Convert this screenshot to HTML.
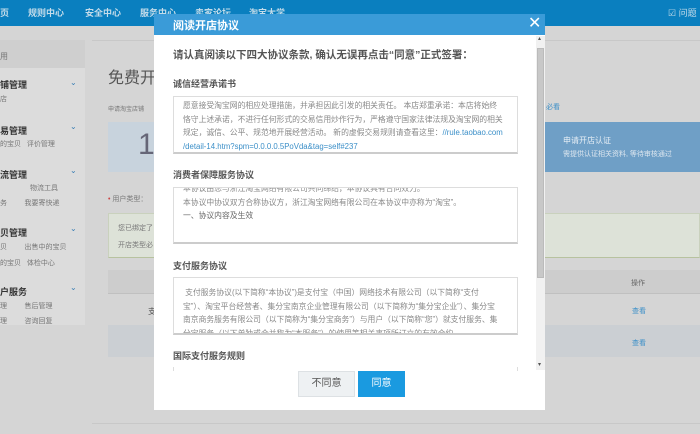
<!DOCTYPE html>
<html><head><meta charset="utf-8"><style>
*{margin:0;padding:0;box-sizing:border-box}
body{width:700px;height:434px;overflow:hidden;background:#d5d5d5;font-family:"Liberation Sans","Noto Sans CJK SC",sans-serif;position:relative;color:#555}
.a{position:absolute;white-space:nowrap}
.top{left:0;top:0;width:700px;height:26px;background:#0a7fbf}
.top span{position:absolute;top:6px;font-size:9px;color:#c4dcea;font-weight:bold}
.sb{left:0;top:40px;width:85px;height:285px;background:#dcdcdc}
.sbh{left:0;top:40px;width:85px;height:28px;background:#cfcfcf}
.sbt{font-size:9px;font-weight:bold;color:#333}
.sbs{font-size:7px;color:#777}
.chev{font-size:8px;color:#3b7fb5}
.modal{left:154px;top:14px;width:391px;height:396px;background:#fff}
.mh{left:154px;top:14px;width:391px;height:21px;background:#3a9bd8}
.box{background:#fff;border:1px solid #ddd;border-bottom:2px solid #ccc;overflow:hidden}
.box p{font-size:7.8px;color:#888;line-height:13.5px;white-space:nowrap;padding-left:9px}
.h2{font-size:9px;color:#555;font-weight:bold}
</style></head><body>
<div class="a top">
<span style="left:0">页</span><span style="left:28px">规则中心</span><span style="left:85px">安全中心</span><span style="left:140px">服务中心</span><span style="left:195px">卖家论坛</span><span style="left:249px">淘宝大学</span><span style="left:668px;font-weight:normal">☑ 问题</span>
</div>
<div class="a" style="left:92px;top:40px;width:608px;height:1px;background:#c8c8c8"></div>
<div class="a sb"></div><div class="a sbh"></div>
<div class="a sbs" style="left:0;top:51px;font-size:8px">用</div>
<div class="a sbt" style="left:0;top:78px">铺管理</div><div class="a chev" style="left:70px;top:78px">⌄</div>
<div class="a sbs" style="left:0;top:94px">店</div>
<div class="a sbt" style="left:0;top:124px">易管理</div><div class="a chev" style="left:70px;top:122px">⌄</div>
<div class="a sbs" style="left:0;top:139px">的宝贝 &nbsp; 评价管理</div>
<div class="a sbt" style="left:0;top:168px">流管理</div><div class="a chev" style="left:70px;top:166px">⌄</div>
<div class="a sbs" style="left:30px;top:183px">物流工具</div>
<div class="a sbs" style="left:0;top:198px">务 &nbsp; &nbsp; &nbsp; &nbsp; 我要寄快递</div>
<div class="a sbt" style="left:0;top:226px">贝管理</div><div class="a chev" style="left:70px;top:224px">⌄</div>
<div class="a sbs" style="left:0;top:242px">贝 &nbsp; &nbsp; &nbsp; &nbsp; 出售中的宝贝</div>
<div class="a sbs" style="left:0;top:258px">的宝贝 &nbsp; 体检中心</div>
<div class="a sbt" style="left:0;top:285px">户服务</div><div class="a chev" style="left:70px;top:283px">⌄</div>
<div class="a sbs" style="left:0;top:301px">理 &nbsp; &nbsp; &nbsp; &nbsp; 售后管理</div>
<div class="a sbs" style="left:0;top:316px">理 &nbsp; &nbsp; &nbsp; &nbsp; 咨询回复</div>

<div class="a" style="left:108px;top:64px;font-size:16px;color:#555">免费开</div>
<div class="a" style="left:108px;top:104px;font-size:6px;color:#777">申请淘宝店铺</div>
<div class="a" style="left:546px;top:102px;font-size:7px;color:#3b8fc8">必看</div>
<div class="a" style="left:108px;top:122px;width:50px;height:50px;background:#c8d3dd"></div>
<div class="a" style="left:138px;top:128px;font-size:30px;color:#667">1</div>
<div class="a" style="left:545px;top:122px;width:155px;height:50px;background:#6f9fc6"></div>
<div class="a" style="left:563px;top:135px;font-size:8px;color:#e6eef5">申请开店认证</div>
<div class="a" style="left:563px;top:149px;font-size:7px;color:#dce6ef">需提供认证相关资料, 等待审核通过</div>
<div class="a" style="left:108px;top:194px;font-size:7px;color:#777"><span style="color:#c44">•</span> 用户类型：</div>
<div class="a" style="left:108px;top:213px;width:592px;height:45px;background:#dde2d8;border:1px solid #c9d1bd;border-bottom:1px solid #b7c29f"></div>
<div class="a" style="left:118px;top:223px;font-size:7px;color:#777">您已绑定了</div>
<div class="a" style="left:118px;top:240px;font-size:7px;color:#777">开店类型必</div>
<div class="a" style="left:108px;top:270px;width:592px;height:24px;background:#cdcdcd;border-bottom:1px solid #c0c0c0"></div>
<div class="a" style="left:631px;top:278px;font-size:7px;color:#666">操作</div>
<div class="a" style="left:148px;top:306px;font-size:8px;color:#555">支</div>
<div class="a" style="left:632px;top:306px;font-size:7px;color:#3b8fc8">查看</div>
<div class="a" style="left:108px;top:325px;width:592px;height:32px;background:#cbcfd3"></div>
<div class="a" style="left:632px;top:338px;font-size:7px;color:#3b8fc8">查看</div>
<div class="a" style="left:92px;top:423px;width:608px;height:1px;background:#c8c8c8"></div>

<div class="a modal"></div>
<div class="a mh"></div>
<div class="a" style="left:173px;top:17px;font-size:11px;color:#fff;font-weight:bold">阅读开店协议</div>
<div class="a" style="left:528px;top:13px;font-size:16px;color:#fff">✕</div>
<div class="a" style="left:536px;top:36px;width:9px;height:334px;background:#f1f1f1"></div>
<div class="a" style="left:537px;top:48px;width:7px;height:230px;background:#c8c8c8;border:1px solid #bbb"></div>
<div class="a" style="left:538px;top:35px;font-size:6px;color:#555">▴</div>
<div class="a" style="left:538px;top:361px;font-size:6px;color:#555">▾</div>

<div class="a" style="left:173px;top:47px;font-size:10.5px;color:#555;font-weight:bold">请认真阅读以下四大协议条款, 确认无误再点击“同意”正式签署：</div>
<div class="a h2" style="left:173px;top:77px">诚信经营承诺书</div>
<div class="a box" style="left:173px;top:96px;width:345px;height:58px;padding-top:2px">
<p>愿意接受淘宝网的相应处理措施，并承担因此引发的相关责任。 本店郑重承诺：本店将始终</p>
<p>恪守上述承诺，不进行任何形式的交易信用炒作行为，严格遵守国家法律法规及淘宝网的相关</p>
<p>规定，诚信、公平、规范地开展经营活动。 新的虚假交易规则请查看这里：<span style="color:#3b8fc8">//rule.taobao.com</span></p>
<p style="color:#3b8fc8">/detail-14.htm?spm=0.0.0.0.5PoVda&amp;tag=self#237</p>
</div>
<div class="a h2" style="left:173px;top:168px">消费者保障服务协议</div>
<div class="a box" style="left:173px;top:187px;width:345px;height:57px;padding-top:0">
<p style="margin-top:-6px">本协议由您与浙江淘宝网络有限公司共同缔结，本协议具有合同效力。</p>
<p>本协议中协议双方合称协议方，浙江淘宝网络有限公司在本协议中亦称为“淘宝”。</p>
<p style="color:#666">一、协议内容及生效</p>
</div>
<div class="a h2" style="left:173px;top:259px">支付服务协议</div>
<div class="a box" style="left:173px;top:277px;width:345px;height:58px;padding-top:8px">
<p>&nbsp;支付服务协议(以下简称“本协议”)是支付宝（中国）网络技术有限公司（以下简称“支付</p>
<p>宝”）、淘宝平台经营者、集分宝南京企业管理有限公司（以下简称为“集分宝企业”）、集分宝</p>
<p>南京商务服务有限公司（以下简称为“集分宝商务”）与用户（以下简称“您”）就支付服务、集</p>
<p>分宝服务（以下单独或合并称为“本服务”）的使用等相关事项所订立的有效合约。</p>
</div>
<div class="a h2" style="left:173px;top:349px">国际支付服务规则</div>
<div class="a" style="left:173px;top:367px;width:345px;height:4px;border-left:1px solid #ddd;border-right:1px solid #ddd"></div>
<div class="a" style="left:298px;top:371px;width:57px;height:26px;background:#eef1f3;border:1px solid #dde1e4;font-size:10px;color:#555;text-align:center;line-height:24px">不同意</div>
<div class="a" style="left:358px;top:371px;width:47px;height:26px;background:#1a9ae0;font-size:10px;color:#fff;text-align:center;line-height:26px">同意</div>
</body></html>
